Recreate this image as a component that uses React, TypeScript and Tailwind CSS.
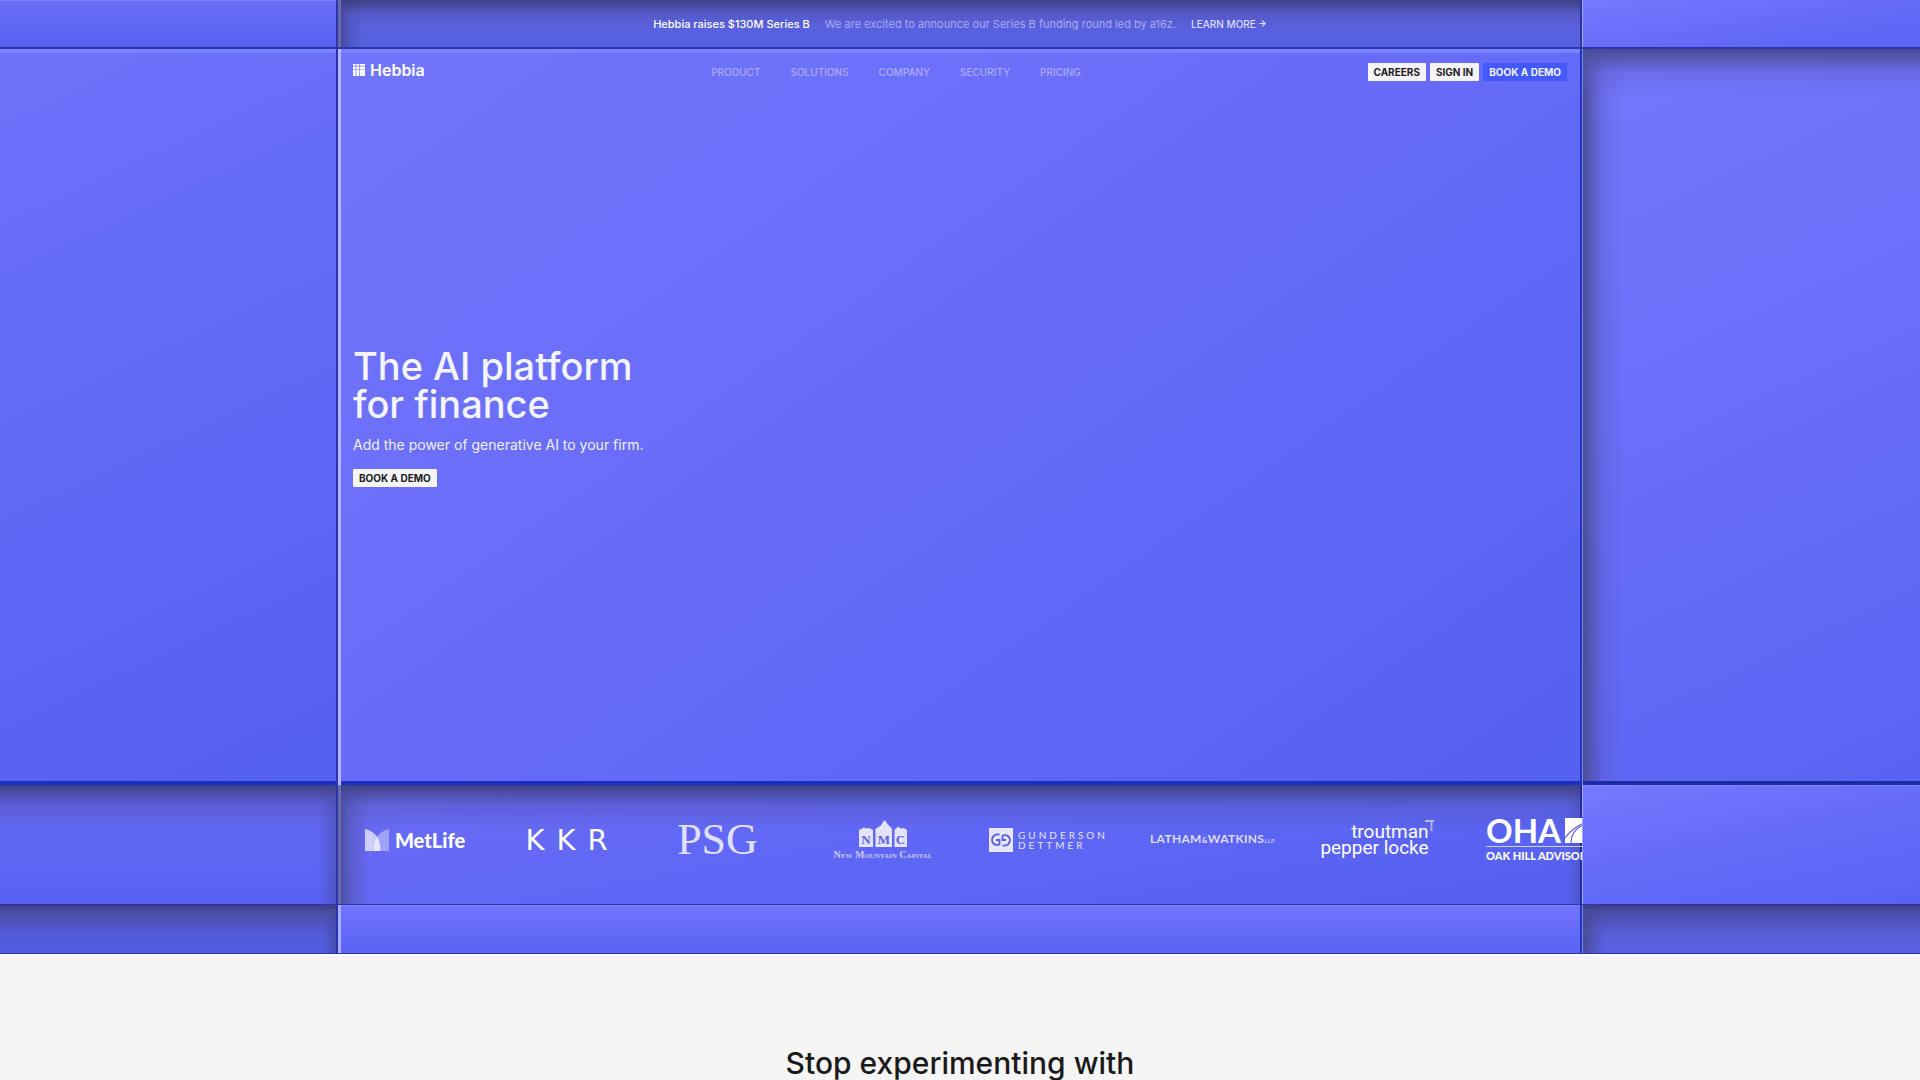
import { ReactNode } from "react";
import { ArrowRight } from "lucide-react";

const navItems = ["PRODUCT", "SOLUTIONS", "COMPANY", "SECURITY", "PRICING"];

// Small square buttons used in the nav and the hero
function CTA(props:{label:string, blue?:boolean}) {
    return (
        <button
            type="button"
            className={`h-[18px] px-[6px] rounded-[1px] text-[10px] leading-[18px] font-bold whitespace-nowrap cursor-pointer ${props.blue ? "bg-[#4359fb] text-[#f0f1ff]" : "bg-[#f5f5f8] text-[#1c1c22]"}`}
        >
            {props.label}
        </button>
    );
}

function HebbiaMark() {
    return (
        <svg viewBox="0 0 12 12" className="size-3" fill="#fff" aria-hidden="true">
            <path d="M0 0h2.600v1.700H0zM3.300 0h2.700v1.700H3.300zM6.700 0H12v1.700H6.700zM0 2.400h2.600v3H0zM3.300 2.400h2.700v3H3.300zM6.700 2.400H12v3H6.700zM0 6.100h2.600V12H0zM3.300 6.100h2.700V12H3.300zM6.700 6.100H12V12H6.700z" />
        </svg>
    );
}

function MetLife() {
    return (
        <div className="flex items-center gap-[6px]">
            <svg viewBox="0 0 24 22" className="w-6 h-[22px]" aria-hidden="true">
                <path d="M0 0C5 1 9 4 12 7.500C9.500 11 8.500 16 8.500 22H0z" fill="#fff" fillOpacity="0.68" />
                <path d="M24 0C19 1 15 4 12 7.500C14.500 11 15.500 16 15.500 22H24z" fill="#fff" fillOpacity="0.38" />
                <path d="M12 7.500C9.500 11 8.500 16 8.500 22h7c0-6-1-11-3.500-14.500z" fill="#fff" fillOpacity="0.85" />
            </svg>
            <span className="font-[Lato,sans-serif] text-[20px] leading-6 font-black">MetLife</span>
        </div>
    );
}

function NewMountain() {
    return (
        <div className="flex flex-col items-center gap-[3px]">
            <svg viewBox="0 0 48 27" className="w-12 h-[27px]" aria-hidden="true">
                <g fill="#e3e3fb">
                    <path d="M0 27V10l2-1 3-1.500 2 1 3-.5 4 2v17z" />
                    <path d="M16.500 27V9l3-2 2-1 2-3 2-3 3 4 3 3 1.500 2v18z" />
                    <path d="M35.500 27V10l2-2 2-1.500 2 2 3-.5 3.500 2v17z" />
                </g>
                <g fill="#5a5fdc" fontFamily="Liberation Serif, serif" fontWeight="700" fontSize="13" textAnchor="middle">
                    <text x="7" y="24">N</text>
                    <text x="25" y="24">M</text>
                    <text x="41.500" y="24">C</text>
                </g>
            </svg>
            <span className="font-['Liberation_Serif',serif] text-[10px] leading-[10px] font-bold [font-variant:small-caps] text-[#c9caf8] whitespace-nowrap">New Mountain Capital</span>
        </div>
    );
}

function Gunderson() {
    return (
        <div className="flex items-center gap-[5px] text-[#e4e4fd]">
            <svg viewBox="0 0 24 24" className="size-6" aria-hidden="true">
                <path d="M0 0h24v24H0z" fill="#e6e6fc" />
                <g fill="none" stroke="#5a5fdc" strokeWidth="1.800">
                    <path d="M10.500 6.500C6 5.500 3 8.500 3 12s3.500 6 7.500 4.500V12H7" />
                    <path d="M13.500 17.500c4.500 1 7.500-2 7.500-5.500s-3.500-6-7.500-4.500V12H17" />
                </g>
            </svg>
            <span className="font-[Lato,sans-serif] text-[10px] leading-[10px] tracking-[3px]">GUNDERSON<br />DETTMER</span>
        </div>
    );
}

function Latham() {
    return (
        <span className="font-[Lato,sans-serif] text-[12px] leading-4 font-bold tracking-wide text-[#dcdcfb] whitespace-nowrap">
            LATHAM<span className="text-[8px]">&amp;</span>WATKINS<span className="text-[6px] font-normal">LLP</span>
        </span>
    );
}

function Troutman() {
    return (
        <div className="flex items-start">
            <span className="font-[Roboto,sans-serif] text-[19px] leading-4 text-right whitespace-nowrap">troutman<br />pepper locke</span>
            <svg viewBox="0 0 10 12" className="w-[10px] h-3 -ml-1 -mt-1" aria-hidden="true">
                <path d="M0 1h9M6.500 1v10" fill="none" stroke="#b5b8d8" strokeWidth="1.800" />
            </svg>
        </div>
    );
}

function OakHill() {
    return (
        <div className="w-[118px] shrink-0">
            <div className="flex items-center gap-1">
                <span className="font-[Lato,sans-serif] text-[33px] leading-[26px] font-bold">OHA</span>
                <svg viewBox="0 0 25 25" className="size-[25px] shrink-0" aria-hidden="true">
                    <path d="M0 0h25v25H0z" fill="#fff" />
                    <path d="M0 20C6 12 14 6 25 3M6 25c0-10 5-17 19-20" fill="none" stroke="#5a5fdc" strokeWidth="1.200" />
                </svg>
            </div>
            <div className="mt-[3px] border-t border-white/70 pt-[3px] font-[Lato,sans-serif] text-[11px] leading-3 font-black whitespace-nowrap">OAK HILL ADVISORS</div>
        </div>
    );
}

function Logo(props:{width:string, children:ReactNode}) {
    return <li className={`flex shrink-0 items-center justify-center ${props.width}`}>{props.children}</li>;
}

// Flat tiles either side of the centre column
function Tile(props:{look:string}) {
    return <div className={`border-[#2a35ac] ${props.look}`} />;
}

function App() {
    return (
        <div className="min-h-screen overflow-hidden bg-[#f5f5f5] font-[Inter,Arial,sans-serif]">
            <section className="grid grid-cols-[minmax(0,1fr)_minmax(0,1244px)_minmax(0,1fr)] border-b border-[#2a35ac] text-white">

                {/* Announcement row */}
                <Tile look="border-r-2 border-b-2 bg-[linear-gradient(to_bottom,#6b6ffa,#5560f1)] shadow-[inset_0_1px_0_#7b80ff]" />
                <div className="flex items-center justify-center gap-[15px] min-h-[49px] border-b-2 border-[#2a35ac] bg-[linear-gradient(to_bottom,#3d4087,#42458fcc_6px,#4b4ea566_13px,transparent_28px),linear-gradient(to_right,#42458f,#4b4ea566_12px,transparent_26px),linear-gradient(to_bottom,#5f61dc,#5460e0)] shadow-[inset_3px_0_0_#6a6ca6,inset_-2px_0_0_#2b349c] text-[11px] leading-4 whitespace-nowrap">
                    <strong className="font-medium">Hebbia raises $130M Series B</strong>
                    <span className="text-[#a9abf5]">We are excited to announce our Series B funding round led by a16z.</span>
                    <a href="#series-b" className="flex items-center gap-[2px] text-[10px] font-medium text-[#dcddff]">LEARN MORE <ArrowRight size={9} strokeWidth={3} /></a>
                </div>
                <Tile look="border-b-2 bg-[linear-gradient(170deg,#7479fe,#5f65f5_80%)] shadow-[inset_1px_0_0_#a3a7ff]" />

                {/* Hero row */}
                <Tile look="border-r-2 bg-[linear-gradient(155deg,#6e72fa,#6068f6_50%,#5460f0)] shadow-[inset_0_4px_0_#7b82ff,inset_0_-4px_0_#1b30bc]" />
                <div className="flex flex-col min-h-[736px] px-[15px] pt-[14px] bg-[linear-gradient(145deg,#7276fc,#6a6ef9_35%,#6268f7_62%,#5460f0)] shadow-[inset_3px_0_0_#b3b6ff,inset_-2px_0_0_#1f34c2,inset_0_4px_0_#7b82ff,inset_0_-4px_0_#1b30bc]">
                    <header className="flex items-start justify-between">
                        <a href="#home" className="flex items-center gap-[5px] -mt-[2px]">
                            <HebbiaMark />
                            <span className="text-[16px] leading-[18px] font-semibold">Hebbia</span>
                        </a>
                        <nav className="flex gap-[30px] text-[10px] leading-[18px] font-medium text-[#a9acff]">
                            {navItems.map((item)=>(
                                <a key={item} href={`#${item.toLowerCase()}`}>{item}</a>
                            ))}
                        </nav>
                        <div className="flex gap-1">
                            <CTA label="CAREERS" />
                            <CTA label="SIGN IN" />
                            <CTA label="BOOK A DEMO" blue />
                        </div>
                    </header>

                    <main className="flex flex-1 flex-col items-start justify-center pb-8">
                        <h1 className="text-[38px] leading-[38px] font-medium text-[#f4f4ff]">The AI platform<br />for finance</h1>
                        <p className="mt-3 text-[14px] leading-5 text-[#f0f0ff]">Add the power of generative AI to your firm.</p>
                        <div className="mt-[14px] flex">
                            <CTA label="BOOK A DEMO" />
                        </div>
                    </main>
                </div>
                <Tile look="bg-[linear-gradient(to_bottom,#4a4d96,#4e52a5cc_10px,#5a5dc855_24px,transparent_48px),linear-gradient(to_right,#484b94,#4e52a5aa_10px,#5a5dc855_22px,transparent_44px),linear-gradient(155deg,#7478fd,#6b70fa_40%,#5a62f3)] shadow-[inset_1px_0_0_#8286d4,inset_0_-4px_0_#1b2ca4]" />

                {/* Customer logos */}
                <Tile look="border-r-2 border-b bg-[linear-gradient(to_bottom,#3e4187,#464992cc_8px,#4f52b066_20px,transparent_44px),linear-gradient(to_left,#4449a088,transparent_18px),linear-gradient(to_bottom,#6569f5,#5962f2)]" />
                <div className="flex items-center overflow-hidden min-h-[120px] pb-[10px] border-b border-[#2a35ac] bg-[linear-gradient(to_bottom,#3e4187,#464992cc_8px,#4f52b066_20px,transparent_44px),linear-gradient(to_right,#484b94,#4f52a888_12px,transparent_32px),linear-gradient(to_left,#4449a088,transparent_14px),linear-gradient(170deg,#6a6cf4,#6067f6_45%,#5560ee)] shadow-[inset_3px_0_0_#6a6ca6,inset_-2px_0_0_#1f2c9c]">
                    <ul className="flex items-center gap-10 pl-[19px]">
                        <Logo width="w-[116px]"><MetLife /></Logo>
                        <Logo width="w-[107px]"><span className="pl-3 font-['DejaVu_Sans',sans-serif] text-[29px] leading-8 tracking-[12px]">KKR</span></Logo>
                        <Logo width="w-[115px]"><span className="font-['Liberation_Serif',serif] text-[44px] leading-8 text-[#e0e0fb]">PSG</span></Logo>
                        <Logo width="w-[136px]"><NewMountain /></Logo>
                        <Logo width="w-[115px]"><Gunderson /></Logo>
                        <Logo width="w-[133px]"><Latham /></Logo>
                        <Logo width="w-[117px]"><Troutman /></Logo>
                        <Logo width="w-[138px]"><OakHill /></Logo>
                    </ul>
                </div>
                <Tile look="border-b bg-[linear-gradient(168deg,#767afe,#666bf9_45%,#5a62f3)] shadow-[inset_1px_0_0_#a3a7ff,inset_0_1px_0_#8287ff]" />

                {/* Bottom row */}
                <Tile look="border-r-2 bg-[linear-gradient(to_bottom,#3c3f86,#464992aa_7px,transparent_28px),linear-gradient(to_left,#3c418f88,transparent_14px),linear-gradient(to_bottom,#5558cc,#525de2)]" />
                <div className="min-h-[48px] bg-[linear-gradient(to_bottom,#7175fc,#5a62f4)] shadow-[inset_3px_0_0_#a9adff,inset_-2px_0_0_#1f34c2,inset_0_1px_0_#7f84ff]" />
                <Tile look="bg-[linear-gradient(to_bottom,#3c3f86,#464992aa_7px,transparent_28px),linear-gradient(to_right,#484b94,transparent_22px),linear-gradient(to_bottom,#5558cc,#5a60e2)] shadow-[inset_1px_0_0_#8286d4]" />
            </section>

            <section className="border-t-2 border-white pt-[89px] text-center">
                <h2 className="text-[30px] leading-9 font-medium text-[#1a1a1a]">Stop experimenting with</h2>
            </section>
        </div>
    );
}

export default App;
